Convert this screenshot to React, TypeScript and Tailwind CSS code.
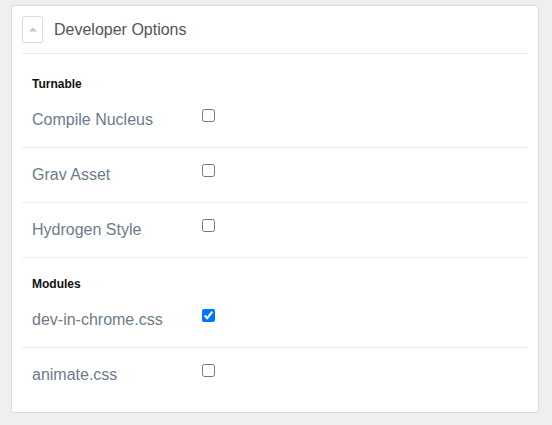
import React from 'react';

type Item = { label: string; checked?: boolean };

const groups: { title: string; items: Item[] }[] = [
  {
    title: 'Turnable',
    items: [{ label: 'Compile Nucleus' }, { label: 'Grav Asset' }, { label: 'Hydrogen Style' }],
  },
  {
    title: 'Modules',
    items: [{ label: 'dev-in-chrome.css', checked: true }, { label: 'animate.css' }],
  },
];

const App: React.FC = () => {
  return (
    <div className="min-h-screen bg-[#efefef] pl-[11px] pt-[5px] font-['Liberation_Sans',Arial,sans-serif]">
      <div className="w-[528px] h-[408px] bg-white border border-[#dcdcdc] rounded-[3px] px-[10px] pt-[10px]">
        <div className="flex items-center h-[38px] pb-[10px] border-b border-[#ebebeb]">
          <button
            type="button"
            className="w-[21px] h-[27px] border border-[#dcdcdc] rounded-[2px] bg-white flex items-center justify-center"
          >
            <svg width="8" height="5" viewBox="0 0 8 5">
              <path d="M0 4.5 L4 0.5 L8 4.5 Z" fill="#c4c4c4" />
            </svg>
          </button>
          <span className="ml-[11px] text-[16px] leading-[24px] text-[#555]">Developer Options</span>
        </div>

        {groups.map((group, gi) => (
          <div key={group.title}>
            <div
              className={`${gi === 0 ? 'h-[39px] pt-[21px]' : 'h-[35px] pt-[17px]'} text-[12px] leading-[18px] font-bold text-[#111] pl-[10px]`}
            >
              {group.title}
            </div>
            {group.items.map((item, i) => {
              const last = i === group.items.length - 1 && gi === groups.length - 1;
              return (
                <div
                  key={item.label}
                  className={`flex items-start h-[55px] pt-[14px] pl-[10px] ${last ? '' : 'border-b border-[#efefef]'}`}
                >
                  <span className="w-[170px] text-[16px] leading-[25px] text-[#6d7b8a]">{item.label}</span>
                  <input
                    type="checkbox"
                    defaultChecked={item.checked}
                    className="mt-[2px] w-[13px] h-[13px]"
                  />
                </div>
              );
            })}
          </div>
        ))}
      </div>
    </div>
  );
};

export default App;
